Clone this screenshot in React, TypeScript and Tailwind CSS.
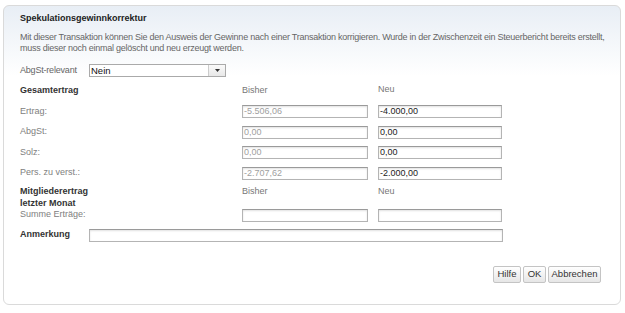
import React from "react";

const font = "font-['Liberation_Sans',Arial,sans-serif]";

function Field({ value = "", disabled = false, className = "w-[126px]" }: { value?: string; disabled?: boolean; className?: string }) {
  return (
    <div
      className={`${className} h-[13px] border border-[#b4b4b4] border-t-[#9a9a9a] bg-white shadow-[inset_0_1px_2px_rgba(0,0,0,0.12)] pl-[1px] text-[9px] leading-[11px] ${disabled ? "text-[#a0a0a0]" : "text-[#222]"}`}
    >
      {value}
    </div>
  );
}

function Btn({ label, className }: { label: string; className: string }) {
  return (
    <div className={`${className} h-[17px] flex items-center justify-center border border-[#c4c4c4] rounded-[2px] bg-[linear-gradient(to_bottom,#ffffff,#e6e6e6)] text-[9.5px] text-[#333]`}>
      {label}
    </div>
  );
}

const rows = [
  { label: "Ertrag:", old: "-5.506,06", neu: "-4.000,00" },
  { label: "AbgSt:", old: "0,00", neu: "0,00" },
  { label: "Solz:", old: "0,00", neu: "0,00" },
  { label: "Pers. zu verst.:", old: "-2.707,62", neu: "-2.000,00" },
];

export default function App() {
  return (
    <div className={`${font} w-[625px] h-[313px] bg-white pt-[5px] pl-[3px]`}>
      <div className="w-[618px] h-[300px] rounded-[6px] border border-[#dadada] bg-[linear-gradient(to_bottom,#e8eef5,#ffffff_70px)] pl-[16px] pt-[6px]">
        <div className="text-[9px] font-bold text-[#222] leading-[12px]">Spekulationsgewinnkorrektur</div>
        <div className="mt-[8px] text-[9px] tracking-[-0.25px] leading-[11px] text-[#666] w-[592px]">
          Mit dieser Transaktion können Sie den Ausweis der Gewinne nach einer Transaktion korrigieren. Wurde in der Zwischenzeit ein Steuerbericht bereits erstellt, muss dieser noch einmal gelöscht und neu erzeugt werden.
        </div>

        <div className="mt-[10px] flex items-center h-[13px]">
          <div className="w-[69px] text-[9px] tracking-[-0.2px] text-[#666]">AbgSt-relevant</div>
          <div className="w-[137px] h-[13px] flex border border-[#aaa] bg-white text-[9.5px] text-[#111] leading-[11px]">
            <div className="flex-1 pl-[1px]">Nein</div>
            <div className="w-[17px] border-l border-[#ccc] bg-[linear-gradient(to_bottom,#fafafa,#e8e8e8)] flex items-center justify-center">
              <svg width="5" height="3" viewBox="0 0 5 3"><path d="M0 0h5L2.5 3z" fill="#333" /></svg>
            </div>
          </div>
        </div>

        <div className="mt-[8px] flex items-center h-[12px] text-[9px]">
          <div className="w-[222px] font-bold text-[#333]">Gesamtertrag</div>
          <div className="w-[136px] text-[#777]">Bisher</div>
          <div className="text-[#777] -mt-[3px]">Neu</div>
        </div>

        <div className="mt-[8px] flex flex-col gap-[7.5px]">
          {rows.map(r => (
            <div key={r.label} className="flex items-center h-[13px]">
              <div className="w-[222px] text-[9px] text-[#808080]">{r.label}</div>
              <Field value={r.old} disabled />
              <div className="w-[10px]" />
              <Field value={r.neu} className="w-[124px]" />
            </div>
          ))}
        </div>

        <div className="mt-[5px] flex text-[9px] leading-[12px]">
          <div className="w-[222px] font-bold text-[#333]">
            Mitgliederertrag
            <br />
            letzter Monat
          </div>
          <div className="w-[136px] text-[#777]">Bisher</div>
          <div className="text-[#777]">Neu</div>
        </div>
        <div className="flex items-center h-[13px]">
          <div className="w-[222px] text-[9px] text-[#808080]">Summe Erträge:</div>
          <Field />
          <div className="w-[10px]" />
          <Field className="w-[124px]" />
        </div>

        <div className="mt-[7px] flex items-center h-[13px]">
          <div className="w-[69px] text-[9px] font-bold text-[#333]">Anmerkung</div>
          <Field className="w-[414px]" />
        </div>

        <div className="mt-[24px] flex justify-end pr-[19px] gap-[2px]">
          <Btn label="Hilfe" className="w-[28px]" />
          <Btn label="OK" className="w-[23px]" />
          <Btn label="Abbrechen" className="w-[53px]" />
        </div>
      </div>
    </div>
  );
}
